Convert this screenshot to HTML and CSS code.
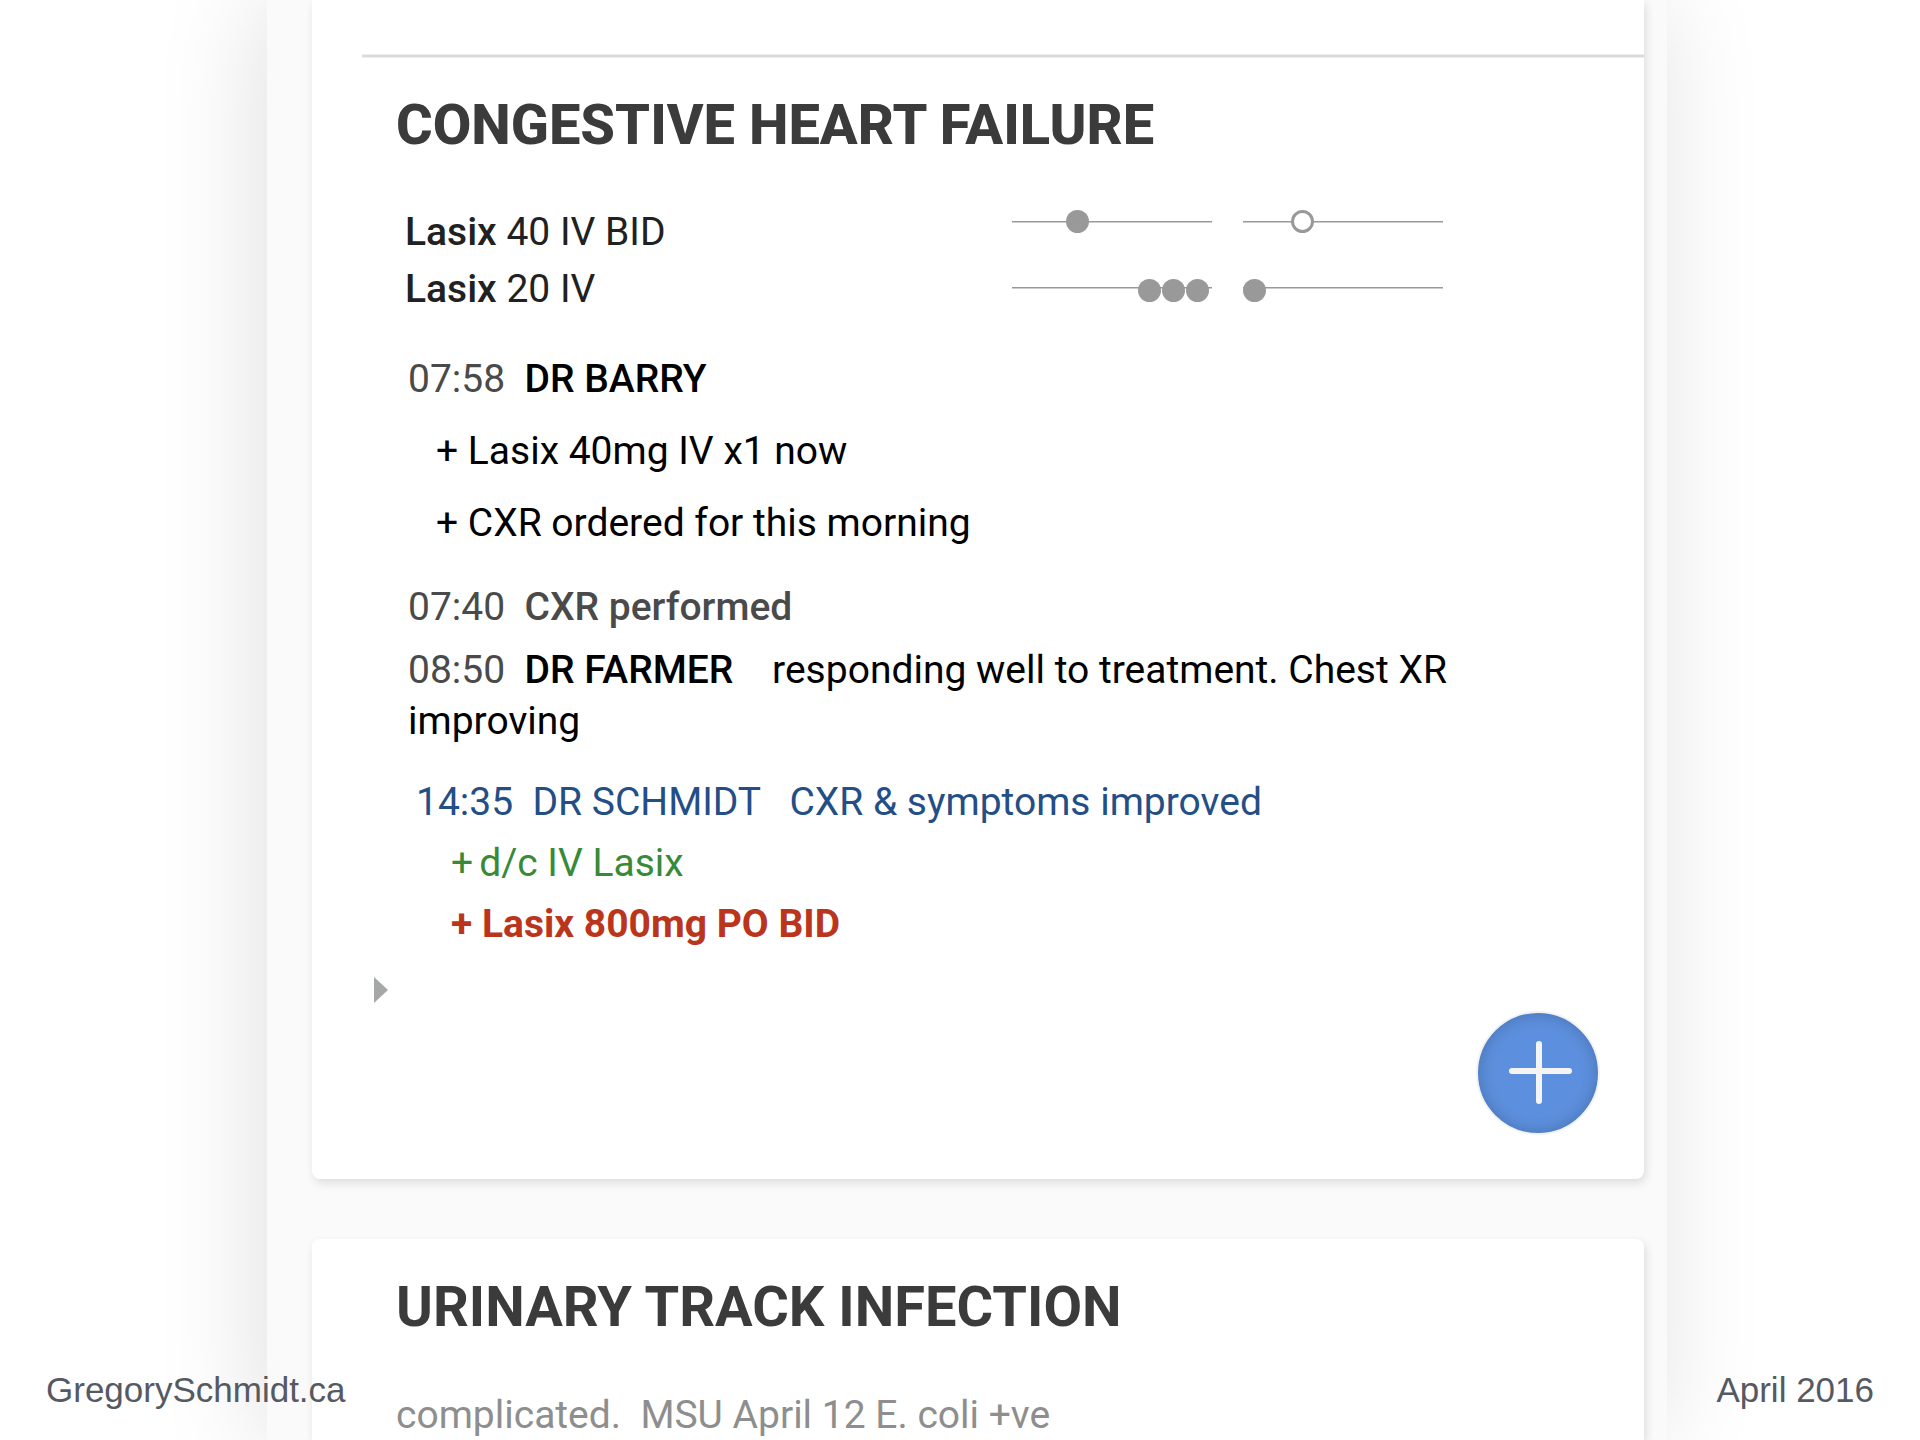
FILE: index.html
```html
<!DOCTYPE html>
<html lang="en">
<head>
<meta charset="utf-8">
<title>Patient problems</title>
<link rel="stylesheet" href="styles.css">
</head>
<body>
<main class="panel">
  <section class="card">
    <hr class="rule">
    <h2 class="title active">CONGESTIVE HEART FAILURE</h2>
    <ul class="meds">
      <li class="med">
        <span><b class="medium">Lasix</b> 40 IV BID</span>
        <svg class="timeline" viewBox="0 0 431 57" aria-hidden="true">
          <path class="track" d="M0 17.5H200M231 17.5H431"/>
          <path class="track-shade" d="M0 18.5H200M231 18.5H431"/>
          <circle class="dose" cx="65.5" cy="17.5" r="11.5"/>
          <circle class="dose-open" cx="290.5" cy="17.5" r="10"/>
        </svg>
      </li>
      <li class="med">
        <span><b class="medium">Lasix</b> 20 IV</span>
        <svg class="timeline" viewBox="0 0 431 57" aria-hidden="true">
          <path class="track" d="M0 26.5H200M231 26.5H431"/>
          <path class="track-shade" d="M0 27.5H200M231 27.5H431"/>
          <circle class="dose" cx="137.5" cy="29.5" r="11.5"/>
          <circle class="dose" cx="161.5" cy="29.5" r="11.5"/>
          <circle class="dose" cx="185.5" cy="29.5" r="11.5"/>
          <circle class="dose" cx="242.5" cy="29.5" r="11.5"/>
        </svg>
      </li>
    </ul>
    <div class="notes">
      <div class="entry">
        <p class="line"><time>07:58</time>  <b class="medium">DR BARRY</b></p>
        <p class="line order">+ Lasix 40mg IV x1 now</p>
        <p class="line order">+ CXR ordered for this morning</p>
      </div>
      <div class="entry compact">
        <p class="line"><time>07:40</time>  <b class="medium muted">CXR performed</b></p>
        <p class="line"><time>08:50</time>  <b class="medium">DR FARMER</b>    responding well to treatment. Chest XR improving</p>
      </div>
      <div class="entry draft">
        <p class="line">14:35  DR SCHMIDT   CXR &amp; symptoms improved</p>
        <p class="line order stop"><span>+</span><span>d/c IV Lasix</span></p>
        <p class="line order alert">+ Lasix 800mg PO BID</p>
      </div>
    </div>
    <button class="expand" type="button" aria-label="Expand">
      <svg width="14" height="26" viewBox="0 0 14 26"><path d="M0 0L14 13L0 26Z" fill="#a6a8a8"/></svg>
    </button>
    <button class="add" type="button" aria-label="Add">
      <svg width="68" height="68" viewBox="0 0 68 68"><path d="M35 5V62M8 32H65"/></svg>
    </button>
  </section>
  <section class="card next">
    <h2 class="title">URINARY TRACK INFECTION</h2>
    <p class="summary">complicated.  MSU April 12 E. coli +ve</p>
  </section>
</main>
<footer class="credit">
  <a href="#">GregorySchmidt.ca</a>
  <span>April 2016</span>
</footer>
</body>
</html>
```
FILE: styles.css
```css
* {
  box-sizing: border-box;
}

body {
  margin: 0;
  padding-left: 14px;
  background: #fff;
  color: #000;
  font: 39px/51px Roboto, sans-serif;
  position: relative;
  overflow: hidden;
}

h2, p, ul {
  margin: 0;
  padding: 0;
}

button {
  border: 0;
  padding: 0;
  background: none;
  cursor: pointer;
}

.panel {
  display: flex;
  flex-direction: column;
  gap: 60px;
  max-width: 1400px;
  min-height: 100vh;
  margin: 0 auto;
  padding: 0 23px 0 45px;
  background: #fafafa;
  box-shadow: -8px 0 100px rgba(0, 0, 0, 0.12);
}

.card {
  position: relative;
  padding: 54px 44px 176px 84px;
  background: #fff;
  border-radius: 0 0 8px 8px;
  box-shadow: 2px 4px 10px rgba(0, 0, 0, 0.12);
}

.card.next {
  flex: 1;
  padding-top: 36px;
  padding-bottom: 0;
  border-radius: 8px 8px 0 0;
}

.rule {
  height: 4px;
  margin: 0 -44px 35px -34px;
  border: 1px solid #eee;
  border-width: 1px 0;
  background: #dadada;
}

.title {
  color: #3b3b3b;
  font-size: 56px;
  font-weight: 700;
  line-height: 64px;
}

.title.active {
  font-weight: 800;
}

.medium {
  font-weight: 500;
}

.meds {
  margin: 47px 0 36px 9px;
  color: #212121;
  list-style: none;
  line-height: 57px;
}

.med {
  display: grid;
  grid-template-columns: 607px 431px;
}

.timeline {
  width: 431px;
  height: 57px;
}

.track {
  stroke: #999;
}

.track-shade {
  stroke: #ccc;
}

.dose {
  fill: #999;
}

.dose-open {
  fill: #fff;
  stroke: #999;
  stroke-width: 3px;
}

.notes {
  display: flex;
  flex-direction: column;
  gap: 30px;
  padding-left: 12px;
}

.entry {
  display: flex;
  flex-direction: column;
  gap: 21px;
}

.entry.compact {
  gap: 12px;
  padding-top: 3px;
}

.line, .summary {
  white-space: pre-wrap;
}

.line time, .muted {
  color: #4a4a4a;
}

.order {
  padding-left: 28px;
}

.draft {
  gap: 10px;
  padding-left: 8px;
  color: #244e86;
}

.draft .order {
  padding-left: 35px;
}

.stop {
  display: flex;
  gap: 6px;
  color: #388a38;
}

.alert {
  color: #bb351d;
  font-weight: 700;
}

.expand {
  display: block;
  margin: 27px 0 0 -22px;
  line-height: 0;
}

.add {
  position: absolute;
  right: 44px;
  bottom: 44px;
  display: grid;
  place-items: center;
  width: 124px;
  height: 124px;
  border: 2px solid #f2f2f2;
  border-radius: 50%;
  background: #5c8fdd;
  box-shadow: inset 0 0 16px rgba(0, 0, 0, 0.2);
}

.add path {
  fill: none;
  stroke: #f4f4f4;
  stroke-width: 6px;
  stroke-linecap: round;
}

.summary {
  margin-top: 52px;
  color: #8e8e8e;
  line-height: 48px;
}

.credit {
  position: absolute;
  right: 46px;
  bottom: 29px;
  left: 46px;
  display: flex;
  justify-content: space-between;
  color: #555962;
  font: 35px/42px "Liberation Sans", Arial, sans-serif;
}

.credit a {
  color: inherit;
  text-decoration: none;
}
```
